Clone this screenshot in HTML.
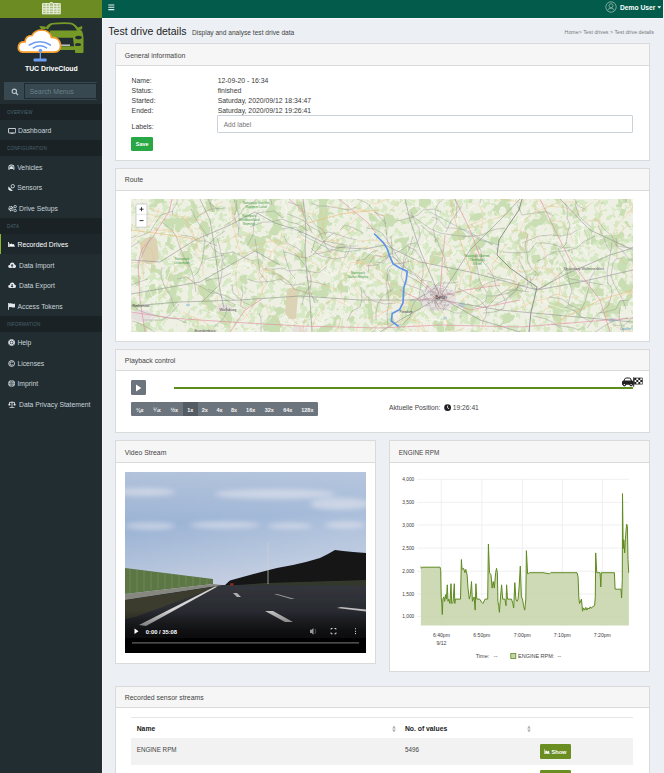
<!DOCTYPE html>
<html><head><meta charset="utf-8">
<style>
*{box-sizing:border-box;margin:0;padding:0}
html,body{width:664px;height:773px;overflow:hidden;background:#ecf0f5;font-family:"Liberation Sans",sans-serif;color:#333}
.abs{position:absolute}
#sb{position:absolute;left:0;top:0;width:101.7px;height:773px;background:#222d32}
#logobar{position:absolute;left:0;top:0;width:101.7px;height:17.7px;background:#6c8b23}
#nav{position:absolute;left:102px;top:0;width:561px;height:17.7px;background:#035c4b}
.sec{position:absolute;left:0;width:101.7px;height:16px;background:#1a2226;color:#4b646f;font-size:4.5px;line-height:17.5px;padding-left:7px;letter-spacing:0.2px}
.item{position:absolute;left:0;width:101.7px;height:20.6px;color:#c8d3d8;font-size:6.8px;line-height:20.6px;white-space:nowrap}
.item .ic{position:absolute;left:8px;top:0;width:9px;height:20.6px}
.item .tx{position:absolute;left:18px;top:1px}
.item.act{background:#1e282c;color:#fff;border-left:1.3px solid #8bb827}
.card{position:absolute;background:#fff;border:1px solid #dadada}
.card .hd{position:absolute;left:0;top:0;right:0;background:#f6f6f6;border-bottom:1px solid #dadada;font-size:6.9px;color:#444;padding-left:8.8px}
</style></head><body>
<div id="sb">
  <div id="logobar">
    <svg class="abs" style="left:41.5px;top:0.8px" width="19" height="14" viewBox="0 0 19 14">
      <path d="M0.6,2.6 Q5,2.2 8,2.2 Q9.3,0.6 10.6,2.2 Q14,2.2 18.2,2.6 L18.2,13.2 L0.6,13.2 Z" fill="#dfe8cc" opacity="0.55"/>
      <g fill="none" stroke="#e8eedb" stroke-width="1.1">
        <path d="M0.6,2.8 Q5,2.2 8,2.2 Q9.3,0.8 10.6,2.2 Q14,2.2 18.2,2.8 L18.2,12.8 L0.6,12.8 Z"/>
        <path d="M0.6,5.3 H18.2 M0.6,7.9 H18.2 M0.6,10.3 H18.2 M4.2,2.5 V12.8 M7.3,2.4 V12.8 M11.6,2.4 V12.8 M15,2.5 V12.8"/>
      </g>
    </svg>
  </div>
  <!-- logo -->
  <svg class="abs" style="left:0;top:18px" width="102" height="46" viewBox="0 18 102 46">
    <g fill="#769a27">
      <path d="M45.5,28 Q48,23.5 52,23 Q61,22 70,22.5 Q75,23 78.5,28.5 L82,31 Q83.5,34 83.5,38 L83.5,52 Q83.5,53 82.5,53 L76,53 Q75,53 75,52 L75,50 L50,50 L50,31 Z"/>
      <path d="M39.3,26 L45.5,26.5 L46,29 L41,29 Z"/>
      <path d="M76.6,28 L82.2,26 L82.2,29.3 L77.5,30 Z"/>
    </g>
    <g fill="#222d32">
      <path d="M47.5,30.4 Q50,25 53,24.6 Q61,23.8 70,24.2 Q74,24.6 77,30.4 Z"/>
      <path d="M54,37.8 L73,37.8 L74,46.3 L54,46.3 Z"/>
      <ellipse cx="78.5" cy="37.5" rx="3.3" ry="1.8"/>
      <ellipse cx="78" cy="44.5" rx="3" ry="1.6"/>
    </g>
    <rect x="58" y="44.5" width="12" height="1.4" fill="#c9ccc9"/>
    <path d="M22.5,52.2 Q17.5,51.5 18.5,46 Q19.5,41.5 25,42 Q25.5,35.5 32,35.5 Q35,30 42,30 Q50,30.5 51.5,37.5 Q59,37 60.5,44.5 Q61,52.2 54,52.2 Z" fill="#fff" stroke="#f39c2c" stroke-width="1.7"/>
    <g fill="none" stroke="#6d9df0" stroke-width="1.5" stroke-linecap="round">
      <path d="M29.3,45 Q40,38.5 50.4,45"/>
      <path d="M33.3,47.9 Q40,43.5 46.6,47.9"/>
    </g>
    <circle cx="40.4" cy="50.6" r="1.8" fill="#6d9df0"/>
    <rect x="39.7" y="51" width="1.3" height="8" fill="#6d9df0"/>
    <rect x="33.6" y="58.6" width="13" height="2.8" rx="0.6" fill="#6d9df0"/>
  </svg>
  <div class="abs" style="left:0;top:63.8px;width:101.7px;text-align:center;color:#fff;font-weight:bold;font-size:6.9px;line-height:10px;padding-left:1px">TUC DriveCloud</div>
  <!-- search -->
  <div class="abs" style="left:4px;top:82px;width:93px;height:18px;background:#374850;border-radius:1px"></div>
  <div class="abs" style="left:24px;top:83px;width:72.5px;height:16px;background:#374850;border:0.8px solid #1f2b30"></div>
  <svg class="abs" style="left:11px;top:87.5px" width="8" height="8" viewBox="0 0 8 8"><circle cx="3.3" cy="3.3" r="2.2" fill="none" stroke="#b8c7ce" stroke-width="1.1"/><path d="M5,5 L7,7" stroke="#b8c7ce" stroke-width="1.3"/></svg>
  <div class="abs" style="left:29.8px;top:84px;line-height:16px;font-size:6.8px;color:#6a808a">Search Menus</div>

  <div class="sec" style="top:104px">OVERVIEW</div>
  <div class="item" style="top:120px"><span class="tx">Dashboard</span></div>
  <div class="sec" style="top:140px">CONFIGURATION</div>
  <div class="item" style="top:157px"><span class="tx" style="left:17.2px">Vehicles</span></div>
  <div class="item" style="top:176.7px"><span class="tx" style="left:17.2px">Sensors</span></div>
  <div class="item" style="top:197.3px"><span class="tx" style="left:19px;top:2px">Drive Setups</span></div>
  <div class="sec" style="top:218px">DATA</div>
  <div class="item act" style="top:234px;height:20.3px"><span class="tx" style="left:16.5px">Recorded Drives</span></div>
  <div class="item" style="top:254.5px"><span class="tx" style="left:19px">Data Import</span></div>
  <div class="item" style="top:275px"><span class="tx" style="left:19px">Data Export</span></div>
  <div class="item" style="top:295.5px"><span class="tx" style="left:17.5px">Access Tokens</span></div>
  <div class="sec" style="top:316px">INFORMATION</div>
  <div class="item" style="top:332px"><span class="tx" style="left:17.4px">Help</span></div>
  <div class="item" style="top:352.7px"><span class="tx" style="left:17.4px">Licenses</span></div>
  <div class="item" style="top:373.3px"><span class="tx" style="left:17.4px">Imprint</span></div>
  <div class="item" style="top:394px"><span class="tx" style="left:19px">Data Privacy Statement</span></div>
<svg class="abs" style="left:8.1px;top:127.6px" width="8.2" height="6.4" viewBox="0 0 8.2 6.4"><rect x="0.45" y="0.45" width="7.3" height="4.5" rx="0.5" fill="none" stroke="#e2e8eb" stroke-width="0.9"/><path d="M2.6,6.1 H5.6 M4.1,5 V6" stroke="#e2e8eb" stroke-width="0.9"/></svg>
<svg class="abs" style="left:8.1px;top:163.6px" width="6.8" height="6.3" viewBox="0 0 6.8 6.3"><path d="M0.4,3.2 Q0.4,0.4 3.4,0.4 Q6.4,0.4 6.4,3.2 L6.4,5.8 L5.2,5.8 L5.2,5 L1.6,5 L1.6,5.8 L0.4,5.8 Z" fill="#e2e8eb"/><path d="M1.3,2.6 Q3.4,1 5.5,2.6" stroke="#222d32" stroke-width="0.8" fill="none"/><rect x="1" y="3.5" width="1.1" height="0.8" fill="#222d32"/><rect x="4.7" y="3.5" width="1.1" height="0.8" fill="#222d32"/></svg>
<svg class="abs" style="left:8.1px;top:184px" width="7" height="7.3" viewBox="0 0 7 7.3"><path d="M0.5,2.5 L4.8,6.8 Q1.5,7.5 0.5,5.5 Q0,4 0.5,2.5 Z" fill="#e2e8eb"/><circle cx="4.8" cy="2.2" r="1.7" fill="none" stroke="#e2e8eb" stroke-width="0.8"/><path d="M2.8,4.5 L3.8,3.3" stroke="#e2e8eb" stroke-width="0.8"/></svg>
<svg class="abs" style="left:8.1px;top:204.8px" width="9" height="7" viewBox="0 0 9 7"><circle cx="3" cy="3.6" r="2" fill="none" stroke="#e2e8eb" stroke-width="1.3" stroke-dasharray="0.9 0.5"/><circle cx="3" cy="3.6" r="0.9" fill="#e2e8eb"/><circle cx="7.2" cy="1.6" r="1.2" fill="none" stroke="#e2e8eb" stroke-width="0.8"/><circle cx="7.2" cy="5.6" r="1.2" fill="none" stroke="#e2e8eb" stroke-width="0.8"/></svg>
<svg class="abs" style="left:7.9px;top:242px" width="7" height="5.4" viewBox="0 0 7 5.4"><path d="M0.4,0 V4.9 H7" stroke="#fff" stroke-width="0.9" fill="none"/><path d="M1.3,4.3 V1.2 L2.5,2.2 L3.6,1.6 L4.8,2.6 L6,2 L6.6,4.3 Z" fill="#fff"/></svg>
<svg class="abs" style="left:7.9px;top:262.4px" width="8.2" height="6.3" viewBox="0 0 8.2 6.3"><path d="M1.8,6 Q0,6 0.2,4.3 Q0.4,2.8 1.8,2.9 Q2.2,0.4 4.3,0.4 Q6.3,0.5 6.5,2.5 Q8.1,2.8 8,4.4 Q7.9,6 6.3,6 Z" fill="#e2e8eb"/><path d="M4.1,2 L5.6,3.6 H4.6 V5.4 H3.6 V3.6 H2.6 Z" fill="#222d32"/></svg>
<svg class="abs" style="left:7.9px;top:282px" width="8.2" height="6.3" viewBox="0 0 8.2 6.3"><path d="M1.8,6 Q0,6 0.2,4.3 Q0.4,2.8 1.8,2.9 Q2.2,0.4 4.3,0.4 Q6.3,0.5 6.5,2.5 Q8.1,2.8 8,4.4 Q7.9,6 6.3,6 Z" fill="#e2e8eb"/><path d="M4.1,5.5 L5.6,3.9 H4.6 V2.1 H3.6 V3.9 H2.6 Z" fill="#222d32"/></svg>
<svg class="abs" style="left:7.9px;top:302.8px" width="7.2" height="6.8" viewBox="0 0 7.2 6.8"><path d="M0.5,0 V6.8" stroke="#e2e8eb" stroke-width="0.9"/><path d="M1,0.5 Q2.5,0 4,0.6 Q5.5,1.2 7,0.6 V4.3 Q5.5,4.9 4,4.3 Q2.5,3.7 1,4.3 Z" fill="#e2e8eb"/></svg>
<svg class="abs" style="left:7.9px;top:339.2px" width="7.2" height="7" viewBox="0 0 7.2 7"><circle cx="3.6" cy="3.5" r="3.3" fill="#e2e8eb"/><circle cx="3.6" cy="3.5" r="1.4" fill="none" stroke="#222d32" stroke-width="0.7"/><path d="M1.3,1.3 L2.6,2.5 M5.9,1.3 L4.6,2.5 M1.3,5.7 L2.6,4.5 M5.9,5.7 L4.6,4.5" stroke="#222d32" stroke-width="0.6"/></svg>
<svg class="abs" style="left:7.9px;top:360px" width="7.2" height="7" viewBox="0 0 7.2 7"><circle cx="3.6" cy="3.5" r="2.9" fill="none" stroke="#e2e8eb" stroke-width="0.9"/><path d="M4.8,2.5 Q4.2,1.9 3.6,1.9 Q2.1,1.9 2.1,3.5 Q2.1,5.1 3.6,5.1 Q4.2,5.1 4.8,4.5" stroke="#e2e8eb" stroke-width="0.8" fill="none"/></svg>
<svg class="abs" style="left:7.9px;top:380.1px" width="7.2" height="7" viewBox="0 0 7.2 7"><circle cx="3.6" cy="3.5" r="3.3" fill="#e2e8eb"/><path d="M3.6,0.6 V6.4 M0.6,3.5 H6.6 M1.2,2 H6 M1.2,5 H6" stroke="#222d32" stroke-width="0.45"/><ellipse cx="3.6" cy="3.5" rx="1.5" ry="3" fill="none" stroke="#222d32" stroke-width="0.45"/></svg>
<svg class="abs" style="left:7.9px;top:400.8px" width="8" height="7" viewBox="0 0 8 7"><path d="M4,0.3 V6.3 M1.5,6.6 H6.5 M1,1.4 H7" stroke="#e2e8eb" stroke-width="0.8"/><path d="M0.2,4 L1.4,1.6 L2.6,4 Q1.4,5.2 0.2,4 Z M5.4,4 L6.6,1.6 L7.8,4 Q6.6,5.2 5.4,4 Z" fill="#e2e8eb"/></svg>
</div>
<div class="abs" style="left:101.7px;top:17.7px;width:1px;height:756px;background:#f4f6fa"></div>
<div id="wl" class="abs" style="left:102px;top:17.7px;width:561px;height:1.3px;background:#f8f9fb"></div>
<div class="abs" style="left:663px;top:0;width:1px;height:773px;background:#efefef"></div>
<div id="nav">
  <svg class="abs" style="left:5.7px;top:3.6px" width="7" height="7" viewBox="0 0 7 7"><path d="M0.3,1 H6.3 M0.3,3.3 H6.3 M0.3,5.6 H6.3" stroke="#e8f0ee" stroke-width="1.1"/></svg>
  <svg class="abs" style="left:502.5px;top:1px" width="12" height="12" viewBox="0 0 12 12"><g fill="none" stroke="#a9c7bf" stroke-width="0.7"><circle cx="6" cy="6" r="5.2"/><circle cx="6" cy="4.7" r="2"/><path d="M2.6,9.6 Q3.2,7.2 6,7.2 Q8.8,7.2 9.4,9.6"/></g></svg>
  <div class="abs" style="left:518px;top:0;line-height:15.6px;font-size:6.7px;font-weight:bold;color:#fff;white-space:nowrap">Demo User</div>
  <svg class="abs" style="left:555px;top:6px" width="5" height="3" viewBox="0 0 5 3"><path d="M0.3,0.3 H4.2 L2.25,2.6 Z" fill="#fff"/></svg>
</div>
<div class="abs" style="left:108.3px;top:24.3px;font-size:10.5px;line-height:14px;color:#222;white-space:nowrap">Test drive details</div>
<div class="abs" style="left:192px;top:28px;font-size:6.6px;line-height:9px;color:#444;white-space:nowrap">Display and analyse test drive data</div>
<div class="abs" style="left:564.6px;top:28px;font-size:5.3px;line-height:9px;color:#777;white-space:nowrap">Home&gt; Test drives &gt; Test drive details</div>

<!-- General information -->
<div class="card" style="left:115px;top:43px;width:535px;height:118px">
  <div class="hd" style="height:22px;line-height:23px">General information</div>
</div>
<!-- Route -->
<div class="card" style="left:115px;top:168px;width:535px;height:174px">
  <div class="hd" style="height:22px;line-height:22px">Route</div>
</div>
<!-- Playback -->
<div class="card" style="left:115px;top:349px;width:535px;height:84px">
  <div class="hd" style="height:21px;line-height:22px">Playback control</div>
</div>
<!-- Video -->
<div class="card" style="left:115px;top:440px;width:261px;height:224px">
  <div class="hd" style="height:22px;line-height:23px">Video Stream</div>
</div>
<!-- Engine RPM -->
<div class="card" style="left:389px;top:440px;width:261px;height:232px">
  <div class="hd" style="height:22px;line-height:23px;font-size:6.4px">ENGINE RPM</div>
</div>
<!-- Recorded sensor streams -->
<div class="card" style="left:115px;top:686px;width:535px;height:120px">
  <div class="hd" style="height:21px;line-height:22px">Recorded sensor streams</div>
</div>
<div class="abs" style="left:131.6px;top:75.5px;font-size:6.85px;line-height:10px;color:#3a3a3a;white-space:nowrap">Name:<br>Status:<br>Started:<br>Ended:</div>
<div class="abs" style="left:217.7px;top:75.5px;font-size:6.85px;line-height:10px;color:#3a3a3a;white-space:nowrap">12-09-20 - 16:34<br>finished<br>Saturday, 2020/09/12 18:34:47<br>Saturday, 2020/09/12 19:26:41</div>
<div class="abs" style="left:131.6px;top:122.3px;font-size:6.85px;line-height:10px;color:#3a3a3a">Labels:</div>
<div class="abs" style="left:217px;top:115px;width:416px;height:18px;border:1px solid #ccd2da;border-radius:1px;background:#fff"></div>
<div class="abs" style="left:223.7px;top:115.5px;line-height:17px;font-size:6.6px;color:#777">Add label</div>
<div class="abs" style="left:131px;top:137px;width:22.2px;height:13.5px;background:#28a745;border-radius:1.3px;color:#fff;font-size:5.4px;font-weight:bold;line-height:15px;text-align:center">Save</div>
<svg class="abs" style="left:131px;top:199px" width="502" height="133" viewBox="131 199 502 133">
<defs>
<filter id="tx1" x="0" y="0" width="100%" height="100%" color-interpolation-filters="sRGB"><feTurbulence type="fractalNoise" baseFrequency="0.16" numOctaves="3" seed="4"/><feColorMatrix type="matrix" values="0 0 0 0 0.84  0 0 0 0 0.91  0 0 0 0 0.77  22 0 0 0 -11.8"/></filter>
<filter id="tx2" x="0" y="0" width="100%" height="100%" color-interpolation-filters="sRGB"><feTurbulence type="fractalNoise" baseFrequency="0.06" numOctaves="3" seed="9"/><feColorMatrix type="matrix" values="0 0 0 0 0.79  0 0 0 0 0.87  0 0 0 0 0.70  25 0 0 0 -14.6"/></filter>
</defs>
<rect x="131" y="199" width="502" height="133" fill="#eff0e4"/>
<rect x="131" y="199" width="502" height="133" filter="url(#tx1)"/>
<rect x="131" y="199" width="502" height="133" filter="url(#tx2)"/>
<path d="M140,243 Q150,232 157,240 L159,258 Q152,268 143,262 Z M287,290 Q296,283 298,295 L296,318 Q289,322 285,312 Z" fill="#dcd2b4"/>
<g fill="#aad3df"><ellipse cx="612" cy="320" rx="3" ry="2"/><ellipse cx="300" cy="232" rx="1.5" ry="1"/><ellipse cx="462" cy="305" rx="3" ry="2.5"/><ellipse cx="445" cy="318" rx="2" ry="1.5"/><ellipse cx="188" cy="305" rx="2" ry="1.2"/></g>
<g fill="#e4e0de"><ellipse cx="438" cy="298" rx="18" ry="13"/><ellipse cx="300" cy="330" rx="8" ry="4"/><ellipse cx="143" cy="316" rx="12" ry="6"/><ellipse cx="224" cy="308" rx="8" ry="4"/></g>
<path d="M358,273 L358,268 L361,258 L359,253 L356,246 L357,235 L363,228M430,252 L428,256 L429,260 L427,270 L429,276M428,225 L434,229 L439,233 L430,238 L422,244 L418,248M166,301 L159,303 L157,299 L152,296 L147,285 L142,280M168,283 L167,279 L170,272 L176,264 L177,260 L176,251M226,267 L233,267 L244,263 L248,263 L252,270M632,202 L636,201 L640,203 L646,209M548,250 L557,251 L563,250 L563,242 L567,234M566,223 L568,228 L576,235 L581,245 L587,255M434,255 L444,257 L451,258 L455,251M392,323 L397,325 L405,320 L408,315 L411,312M266,258 L272,259 L273,255 L272,250 L266,242M393,325 L387,320 L383,318 L377,312M169,208 L164,215 L158,223 L148,224 L141,231M590,246 L591,235 L586,226 L579,223M424,280 L435,282 L440,287 L450,289M423,258 L422,251 L420,247 L425,245M523,287 L516,286 L509,281 L506,271M303,323 L298,325 L291,322 L283,314 L277,317M424,241 L428,242 L430,246 L427,249 L423,256 L416,256 L409,261M468,294 L469,288 L477,284 L482,280 L486,272 L484,265 L481,260M517,234 L519,230 L523,223 L523,218M230,309 L234,318 L237,323 L243,331M402,325 L394,333 L390,334 L386,331 L379,328M445,320 L445,326 L444,335 L439,344 L441,349 L430,355M401,304 L404,310 L404,318 L401,328M376,203 L378,195 L380,186 L390,178M583,268 L575,260 L571,263 L567,266 L562,275 L559,283 L565,290M287,250 L290,244 L295,240 L303,239 L307,238M320,271 L328,274 L331,277 L335,281 L338,292 L343,301 L350,306M302,319 L310,318 L314,319 L318,323 L322,324 L324,319 L330,312M254,265 L243,265 L235,271 L232,281M143,283 L137,277 L133,274 L126,268 L126,263M590,283 L586,293 L581,297 L577,294 L572,291M496,234 L501,232 L509,227 L516,223 L522,219 L530,214 L535,207M303,332 L307,322 L311,314 L315,311M189,222 L198,228 L206,237 L211,243 L216,249 L223,252M347,279 L354,281 L364,281 L369,279M388,201 L396,197 L403,196 L411,202 L420,207 L423,211 L426,217M402,248 L395,252 L390,256 L385,262 L376,264M444,230 L451,228 L457,222 L458,215 L466,211 L475,205M623,202 L620,199 L618,194 L616,188 L613,178M407,267 L410,263 L408,254 L407,243M211,262 L217,268 L224,271 L230,271 L238,268 L246,267 L255,264M506,203 L515,202 L518,199 L525,197M331,276 L337,272 L345,272 L352,276 L363,280 L374,283M541,279 L549,280 L557,281 L562,282 L568,278 L574,277 L581,270M397,332 L402,328 L412,332 L415,340 L421,347M415,278 L413,273 L409,262 L419,259 L426,259M344,282 L348,285 L349,293 L346,302 L346,307 L344,314M505,311 L514,305 L524,302 L527,296M207,219 L212,215 L216,212 L214,203 L210,198 L202,194M348,275 L348,270 L353,267 L359,264 L365,256 L368,252 L369,245M495,248 L506,242 L511,233 L508,227 L508,220 L498,216 L495,211M313,248 L315,257 L319,262 L327,267 L331,271 L333,281 L332,292M242,207 L239,217 L239,221 L242,224 L247,226 L251,227M449,218 L444,217 L436,213 L435,203 L429,193 L427,184 L419,178M486,321 L477,326 L466,328 L462,339 L463,348 L469,356M343,255 L343,260 L344,266 L350,276 L351,280M286,214 L287,210 L284,203 L283,197 L279,192M426,279 L425,286 L418,295 L407,296 L399,300M559,263 L558,268 L562,278 L566,281 L572,290 L567,299M526,207 L535,200 L541,200 L548,196M570,254 L571,246 L579,244 L588,245 L593,246M518,199 L521,194 L524,185 L530,180 L541,177M425,313 L429,316 L431,327 L430,335 L427,339M549,240 L558,241 L561,238 L570,234M470,298 L474,290 L481,284 L486,281M414,260 L423,263 L434,265 L444,266 L446,258M175,224 L174,233 L164,234 L161,238M202,212 L204,207 L201,199 L202,194 L204,189M335,209 L347,207 L352,208 L360,211 L366,204 L373,197 L377,188M254,330 L247,331 L244,334 L237,333 L230,342 L226,350M210,301 L213,297 L222,292 L231,295 L242,297M230,325 L225,319 L219,315 L208,311 L203,307M574,259 L578,252 L579,243 L578,231 L588,228M433,215 L435,206 L433,199 L435,189 L440,183 L440,172M632,217 L638,210 L638,205 L632,200 L632,195 L633,188 L632,182M599,206 L602,200 L603,193 L606,182 L611,178M272,317 L264,324 L253,328 L247,330 L244,333 L237,342 L234,348M320,242 L325,239 L336,236 L345,229M370,213 L372,202 L362,195 L356,192 L350,198 L346,206M343,215 L347,217 L349,213 L350,207 L349,203M580,307 L571,309 L563,309 L557,307 L548,304 L539,298M572,226 L578,223 L585,227 L589,238M232,283 L226,290 L222,301 L216,302M342,316 L340,327 L338,331 L335,341 L337,348 L341,358 L340,366M189,268 L198,264 L201,261 L209,259 L217,258M154,279 L156,283 L158,295 L157,305 L156,309 L151,319M443,321 L432,319 L424,320 L415,322" fill="none" stroke="#fdfdf8" stroke-width="0.55"/>
<path d="M312,287 L311,276 L322,267 L330,260 L332,248 L339,240 L347,234 L357,228M261,271 L271,270 L281,276 L289,282 L293,287 L297,290 L306,292 L313,293M532,209 L538,199 L539,188 L545,179 L553,170 L560,160 L558,151 L554,144M256,265 L245,259 L241,252 L238,246 L236,237 L233,225 L233,216 L232,204M151,231 L160,230 L173,232 L180,241 L189,251M438,238 L444,242 L451,247 L449,254 L451,260M425,331 L421,322 L408,319 L396,323 L387,324 L379,325 L373,327 L368,332M239,261 L236,270 L236,280 L237,289 L240,296 L243,310 L250,319M388,274 L382,271 L369,266 L362,262 L351,254M141,242 L141,255 L144,267 L143,278M283,280 L278,278 L273,272 L267,270 L257,264M262,295 L263,286 L259,278 L258,270 L261,264M317,280 L320,284 L332,288 L337,289M559,273 L560,287 L559,297 L559,303M346,251 L354,259 L360,263 L368,272 L374,277 L383,284 L397,284M535,263 L539,275 L535,280 L528,279 L521,284 L510,287 L500,295 L493,299M318,239 L323,229 L325,216 L327,211 L329,206M155,271 L148,268 L142,262 L129,263M150,217 L146,220 L136,225 L131,228 L121,230 L119,226M406,312 L400,303 L387,300 L379,302M305,317 L303,330 L310,341 L312,350 L308,359M317,237 L311,231 L304,222 L303,209 L298,197 L298,189 L288,181 L282,182M443,254 L436,255 L432,263 L427,273 L423,280 L415,282M512,311 L518,309 L528,304 L534,301 L545,299 L558,294 L566,297 L580,297M266,235 L272,241 L277,245 L290,250 L297,255 L306,258 L317,265M549,313 L556,317 L560,323 L569,323M441,301 L448,299 L459,292 L460,282 L465,270 L470,265 L476,254M267,275 L266,284 L262,291 L260,296 L252,307 L249,313 L243,320M632,226 L641,222 L651,219 L663,218 L669,221 L675,226 L680,237M418,324 L425,333 L431,337 L432,343M365,317 L369,319 L380,315 L390,308 L394,296 L403,288M626,212 L639,212 L648,207 L656,206 L668,204 L679,196 L688,190M357,241 L364,241 L370,240 L378,241 L385,243 L393,243M223,202 L215,205 L204,214 L197,214M573,242 L570,233 L562,222 L550,220M539,208 L529,217 L525,219 L520,230 L521,235 L531,240M304,257 L299,254 L290,246 L280,241 L271,241 L261,244 L251,245M390,203 L386,199 L381,193 L374,190 L365,186 L356,180 L354,175M617,299 L626,293 L639,299 L645,306M630,208 L630,200 L631,191 L627,179 L624,168 L625,163M410,304 L405,301 L395,293 L387,282 L379,273M221,243 L227,241 L234,237 L247,235 L252,232M627,226 L620,232 L617,244 L617,257 L626,264M236,227 L235,221 L232,216 L232,208 L230,201M630,291 L634,285 L633,279 L631,269 L634,262 L636,257M389,255 L381,253 L370,248 L359,247M359,323 L357,328 L356,337 L356,351 L352,357 L350,364 L354,372M197,318 L198,331 L195,343 L189,349 L183,351 L178,353 L168,357M481,331 L483,325 L483,319 L477,309M162,229 L170,230 L176,231 L180,235 L180,247 L181,260 L187,267M548,268 L552,270 L556,282 L562,293M464,328 L456,331 L449,334 L443,333M338,274 L342,267 L345,257 L346,251M175,267 L174,272 L169,277 L167,286 L162,298M183,312 L193,317 L205,322 L208,326 L212,330 L217,340 L223,343 L229,344M282,328 L277,321 L269,314 L265,304M341,318 L338,327 L337,340 L340,352 L339,359 L342,368 L342,376 L344,381M550,207 L543,204 L535,197 L529,196 L522,203 L513,201 L502,199 L497,201M476,247 L479,253 L490,257 L495,260 L504,268 L510,269 L516,278 L518,289M318,211 L314,215 L306,212 L298,211M542,304 L541,295 L541,290 L543,278M441,290 L440,295 L439,306 L446,318 L449,330 L452,338 L456,347 L462,352M190,242 L194,235 L188,224 L183,217M478,286 L484,286 L497,283 L503,284 L517,284M598,226 L600,216 L600,204 L598,199 L593,190 L589,185 L582,180M428,268 L419,273 L417,279 L412,289 L409,298 L404,307 L403,313 L396,324M534,233 L540,241 L545,253 L545,263 L546,270M509,213 L500,217 L490,220 L478,226 L466,228M535,212 L546,208 L554,204 L560,202 L574,202M316,242 L330,241 L335,238 L343,228 L353,222 L358,217M169,203 L174,199 L176,189 L180,185 L187,185 L197,190 L208,192 L215,189M345,303 L341,296 L341,284 L346,275 L349,268 L351,262 L365,264 L378,264M182,274 L189,279 L197,286 L202,289 L206,302 L209,313M560,303 L555,306 L545,309 L539,321M182,218 L187,220 L187,226 L194,237 L197,244 L198,250 L204,253M346,305 L333,299 L326,303 L323,308 L315,319 L313,325 L311,339 L306,346M206,224 L202,220 L193,220 L185,217 L178,216 L170,215 L157,211 L149,208M494,268 L484,278 L481,284 L475,291 L470,295M471,280 L472,273 L475,266 L476,259 L473,248 L479,237 L482,226 L483,219M240,254 L246,253 L258,249 L269,251 L276,253 L287,260M413,325 L418,327 L418,336 L416,342M165,220 L152,215 L146,214 L140,215 L138,221M471,316 L463,306 L462,300 L471,293 L470,282 L471,272 L475,265M393,308 L383,312 L378,312 L371,301 L361,296 L354,288 L357,283 L352,274M307,332 L300,331 L299,326 L291,317M332,206 L345,209 L349,213 L359,210 L364,211M143,244 L152,250 L154,261 L155,267M203,276 L203,266 L197,254 L194,248 L201,237 L202,230 L194,228M217,295 L218,304 L222,314 L229,322 L230,328 L232,339 L231,350 L237,359M332,265 L336,256 L340,248 L337,241 L328,240 L324,234 L322,222 L321,209M384,256 L375,256 L363,261 L354,265M303,225 L300,238 L310,243 L319,252 L331,251 L338,254 L341,261M593,202 L584,209 L576,213 L564,207 L557,207 L549,206M259,280 L266,268 L270,258 L271,252 L280,244 L282,231M417,324 L414,320 L416,307 L410,305 L400,301 L393,296 L386,289M478,203 L484,214 L480,221 L467,226M520,243 L520,257 L518,268 L516,274 L514,281 L518,294 L523,300 L526,308M612,238 L614,231 L619,223 L625,217 L632,208 L639,200 L641,187 L645,178M632,269 L638,278 L638,290 L629,294M600,235 L602,226 L599,220 L586,221M159,208 L156,217 L150,225 L140,231 L135,240 L127,247 L120,247 L115,245M369,201 L375,204 L382,201 L394,197 L390,184 L387,179 L377,172M493,276 L492,264 L498,258 L502,250 L507,244M444,254 L447,266 L447,275 L457,285M525,252 L527,245 L528,234 L518,230 L511,231M518,271 L528,272 L534,268 L543,268 L555,274 L561,278M611,298 L607,310 L607,319 L616,327 L627,331 L638,332 L648,330M404,330 L416,337 L419,344 L426,349 L432,352 L443,348 L446,341 L450,336M435,260 L425,263 L414,262 L408,261 L397,264 L386,258 L378,256M401,202 L395,205 L387,216 L380,215 L374,215 L363,210 L354,207" fill="none" stroke="#efc38a" stroke-width="0.45"/>
<path d="M480,203 L481,196 L480,188 L471,179 L466,173 L464,164M539,275 L531,268 L528,262 L527,253 L525,245 L528,234M217,246 L206,241 L197,241 L193,237 L181,235M505,301 L503,296 L496,287 L494,278 L488,267 L482,261 L481,251 L478,246M208,289 L214,292 L219,294 L223,298 L229,302 L236,305M213,212 L210,204 L213,194 L210,183 L207,176M327,266 L319,273 L306,271 L299,270 L288,271 L283,268 L275,269 L262,269M411,261 L404,263 L394,264 L388,268 L387,273 L388,282 L391,292M151,237 L145,249 L140,260 L138,269M628,318 L618,320 L609,323 L598,330 L591,336 L585,344 L582,354 L578,358M241,286 L243,293 L240,306 L246,309M226,305 L227,310 L225,316 L221,321 L214,327M612,242 L611,250 L609,261 L607,273 L608,284M326,285 L319,283 L308,281 L306,276M225,231 L216,237 L210,243 L206,247M378,250 L372,252 L365,259 L356,261M604,285 L593,283 L583,281 L571,279 L566,277M565,203 L568,211 L567,218 L570,225 L568,231 L566,244 L561,249M456,218 L457,205 L455,200 L455,193 L456,188M232,284 L233,293 L239,298 L243,302 L250,305M627,203 L622,191 L623,183 L622,177M533,316 L546,319 L552,322 L562,329M525,292 L528,285 L527,278 L524,270 L519,260M427,289 L422,284 L414,279 L408,276 L403,268 L404,257 L409,250 L413,236M326,235 L322,229 L316,226 L309,216M231,273 L221,278 L211,279 L206,281M347,321 L352,311 L360,307 L362,299 L361,287M363,290 L366,296 L373,301 L385,304 L396,303M311,285 L307,290 L304,296 L302,305M551,324 L561,326 L574,328 L579,330M483,313 L494,312 L503,309 L507,299 L517,290 L519,282M520,283 L515,291 L505,300 L496,304M311,248 L315,252 L321,256 L335,259 L346,257 L351,246M172,215 L173,209 L177,203 L178,192 L181,183 L184,170 L188,165 L198,165M197,217 L206,211 L212,209 L226,208M272,205 L271,200 L266,191 L254,189 L248,186 L242,179 L239,172M591,227 L584,221 L579,216 L575,204M620,308 L619,317 L621,324 L624,333 L624,340 L626,347 L635,356 L642,356M162,267 L161,277 L164,285 L171,297 L174,307M196,292 L194,280 L191,269 L184,257 L179,245 L177,238 L172,230 L163,223M208,237 L204,231 L197,221 L191,209M283,249 L286,260 L289,269 L291,274 L295,278M482,324 L486,316 L487,309 L481,301 L477,298 L467,293 L458,288M253,261 L245,258 L233,252 L220,254 L212,248 L210,242M411,212 L415,222 L419,228 L420,236 L418,241 L415,246 L411,255M568,306 L570,296 L572,291 L570,285 L567,272 L566,264 L561,255 L558,248M522,243 L527,241 L539,236 L551,235 L561,236 L571,234 L577,230M363,233 L354,228 L345,225 L340,230M458,282 L451,283 L438,283 L433,289 L428,293 L416,299 L410,300M308,231 L298,224 L289,222 L282,219 L271,222 L263,222 L258,224 L250,227M311,203 L319,206 L325,206 L337,208 L342,209 L350,210 L356,207M302,258 L302,252 L297,248 L287,243 L284,236M358,246 L350,246 L342,247 L330,251 L322,253 L313,254M585,209 L578,206 L574,198 L570,195 L562,190 L554,180M430,308 L439,308 L448,310 L455,313 L462,313M595,271 L590,279 L589,287 L587,294 L585,302 L581,310 L579,315M572,247 L564,248 L552,244 L543,243 L536,243 L529,252 L517,253 L503,252M581,310 L570,305 L562,299 L549,297M432,217 L438,219 L446,228 L453,228 L466,230 L476,236 L488,242 L493,245M487,296 L493,296 L499,295 L509,293 L520,286 L526,285 L531,281 L536,274M390,269 L386,282 L388,294 L389,303 L387,314 L388,327M288,202 L301,206 L304,216 L307,222 L312,233M406,258 L403,267 L401,276 L404,283 L411,286 L422,290 L425,296 L422,302M613,325 L623,326 L628,322 L637,313 L636,308 L642,300 L652,292M628,258 L622,250 L617,247 L612,236 L605,230 L598,221M406,213 L418,220 L429,228 L440,233 L452,235 L463,236 L471,236M219,210 L210,204 L206,191 L205,180 L196,170 L184,166M628,260 L640,259 L648,256 L656,259 L664,263 L669,265 L679,268 L688,273M487,273 L499,278 L511,280 L516,282M284,252 L289,253 L299,257 L307,258 L314,254 L321,245 L326,239 L335,232M311,253 L313,248 L315,240 L320,234 L329,232 L339,235 L348,238 L357,240M323,241 L329,242 L340,244 L347,245M436,242 L433,228 L437,222 L435,209 L438,204 L442,200 L451,193 L458,187M132,304 L138,310 L146,313 L154,315 L168,318 L177,319 L187,323M553,216 L547,212 L541,212 L528,214 L522,215 L517,204M376,262 L384,263 L388,257 L394,257 L398,262 L404,270 L416,276 L421,281M226,256 L222,261 L222,272 L220,284 L212,292 L202,302M591,322 L580,316 L575,311 L565,307M132,321 L139,323 L150,329 L156,333 L160,339 L159,347M194,276 L198,272 L202,262 L204,249 L205,242 L203,233M272,273 L278,275 L289,282 L294,289 L307,293 L318,301M236,200 L237,208 L234,216 L239,229M138,237 L150,232 L153,227 L158,219 L161,215 L173,211M376,320 L376,312 L378,303 L383,296 L393,289M616,238 L617,246 L629,248 L639,246 L647,240 L652,233M629,300 L620,301 L616,309 L606,312 L598,313M204,260 L210,258 L215,257 L224,255M473,308 L482,304 L486,300 L487,293 L480,282 L478,272 L476,262 L476,253M598,226 L604,238 L607,246 L611,252M224,226 L231,222 L240,214 L244,208 L255,201 L259,194 L265,191 L274,185M287,214 L293,216 L303,220 L308,225 L319,231 L324,242 L327,248 L331,253M441,212 L434,209 L423,210 L418,215 L409,218 L397,221M406,268 L398,258 L393,249 L388,244 L387,238 L386,229 L384,216 L374,212M479,290 L484,285 L490,282 L500,280M432,282 L423,280 L415,274 L404,267 L398,261 L393,257 L392,249 L391,236M407,246 L415,250 L420,257 L423,262 L423,274 L421,284 L419,296 L422,306M449,272 L444,264 L445,259 L440,248 L437,240 L434,236 L429,232 L421,225M242,238 L238,235 L239,226 L239,215 L236,207 L234,198 L233,189M368,273 L369,264 L375,255 L383,257 L395,253 L402,250 L409,244 L416,243M247,246 L253,235 L254,223 L257,213 L265,212 L274,211 L283,218M259,313 L261,319 L261,333 L263,339 L264,345 L267,355 L268,368M587,328 L595,317 L601,312 L608,306 L612,294 L611,287 L607,282M148,279 L136,283 L127,287 L115,289 L108,286 L101,285M225,266 L223,262 L220,249 L219,244 L217,238M446,232 L451,221 L454,217 L462,206M530,277 L532,288 L540,289 L551,282 L560,274 L564,270 L571,271M386,224 L377,214 L369,205 L365,202 L352,197 L341,193M295,253 L303,263 L310,273 L311,280 L310,291 L315,303M140,241 L131,247 L126,248 L119,252 L108,259 L106,265 L102,275 L98,280M143,320 L155,320 L162,320 L170,315 L173,311 L179,304M537,261 L543,259 L548,255 L557,251 L566,251 L577,248 L583,242 L595,236M626,309 L623,300 L619,293 L614,284 L611,276 L613,263 L616,259 L622,258M366,266 L377,265 L387,258 L393,251 L389,243 L382,233 L374,229 L366,228M136,236 L131,238 L120,240 L108,242 L95,246M305,284 L293,285 L287,284 L280,279 L273,281 L262,282 L257,282 L247,279M425,294 L415,301 L412,307 L410,317 L400,327 L391,337 L386,344M234,300 L226,296 L217,293 L211,293 L205,289 L196,284 L187,277 L177,279M462,237 L473,236 L482,235 L490,231 L497,229 L505,228M255,239 L257,251 L258,259 L260,273 L268,283M485,311 L488,306 L494,300 L497,296 L507,290 L516,290 L529,292" fill="none" stroke="#8e8e8a" stroke-width="0.4"/>
<path d="M282,229 L296,227 L302,235 L314,241 L329,249 L345,252 L360,250 M430,212 L445,220 L460,228 L480,240 L500,245" fill="none" stroke="#8fb0a8" stroke-width="0.5"/>
<path d="M255,212 L275,223 L294,229 L306,234 L333,247 L365,249 L385,245 L420,262 L470,272 L537,290 L580,282 L633,270M303,199 L305,214 L306,233 L305,247 L306,265 L310,300 L312,332M131,260 L160,262 L195,240 L230,225 L255,212M131,294 L200,282 L255,251 L280,265M537,290 L564,275 L610,255 L633,248M131,306 L180,302 L240,300 L300,296 L360,300 L440,300 L500,310 L633,322M440,297 L420,250 L410,220 L405,199M440,297 L470,250 L500,220 L520,199M440,297 L480,320 L520,332M440,297 L400,320 L380,332M200,199 L210,220 L215,250 L220,290 L224,308M560,199 L590,230 L633,250" fill="none" stroke="#8c8c8c" stroke-width="0.55"/>
<path d="M522,199 L519,210 L508,226 L499,240 L497,255 L510,268 L524,278 L537,287 L534,300 L531,312 L529,332" fill="none" stroke="#828282" stroke-width="0.85"/>
<path d="M308,223 L341,214 L357,212 L380,210M131,230 L170,235 L200,240M450,199 L460,240 L470,270M560,320 L600,300 L633,290" fill="none" stroke="#eeb877" stroke-width="0.6"/>
<path d="M172,199 L169,212 L159,227 L153,237 L142,249 L138,263 L140,300 L145,332M131,312 L170,318 L230,322 L300,326 L380,328 L440,325 L520,327 L633,318M339,199 L368,223 L376,233M289,199 L304,212M420,280 L440,297 L465,290 L500,285M540,199 L555,230 L570,260 L600,300 L610,332M455,199 L470,230 L482,262M400,290 L420,300 L440,297 L470,310 L520,300M230,332 L245,310 L262,299M440,297 L442,265 L445,235" fill="none" stroke="#e28aa0" stroke-width="0.6"/>
<path d="M435,295 L433,292M431,293 L436,292M437,304 L442,302M439,307 L435,300M445,301 L444,295M433,288 L436,290M441,303 L443,307M440,299 L433,298M440,300 L440,297M445,304 L443,311M427,298 L424,300M442,292 L444,289M427,302 L429,304M455,292 L461,292M437,288 L433,289M432,292 L430,289M437,301 L437,296M434,310 L430,309M436,299 L439,300M455,295 L448,293M424,295 L428,299M431,293 L428,290M435,294 L430,295M435,298 L435,304M443,305 L449,305M436,286 L441,285M426,305 L431,306M436,307 L436,300M424,298 L429,301M450,294 L444,294M434,300 L436,307M435,298 L430,293M435,295 L439,294M428,298 L430,301M440,301 L446,303M435,294 L440,292M420,302 L417,298M438,287 L437,290M436,286 L433,284M438,294 L440,288M436,296 L431,301M440,299 L434,303M434,295 L440,298M446,289 L448,295M443,298 L440,305M443,299 L442,292M438,301 L442,294M448,293 L454,296M428,288 L428,282M448,297 L442,299M441,289 L445,287M452,290 L450,292M427,292 L433,291M435,286 L439,292M433,300 L432,304M437,289 L435,292M442,287 L445,281M445,300 L440,301M441,294 L446,295M440,299 L436,295M435,297 L430,295M436,302 L439,307M430,305 L428,301M433,295 L433,291M425,292 L427,286M455,290 L456,286M437,308 L439,311M449,304 L444,309M442,290 L440,294M442,299 L445,296" fill="none" stroke="#9a8a90" stroke-width="0.4"/>
<path d="M374.5,234 L383.1,242.3 L387.3,248.9 L389.8,256.4 L393.1,263.8 L399.7,268 L407.2,271.3 L406.3,279.6 L403.8,287.9 L403,302.8 L399.7,309.4 L392.2,313.5 L391.4,321 L398,326" fill="none" stroke="#5a8fe8" stroke-width="1.7" opacity="0.95" stroke-linejoin="round" stroke-linecap="round"/>
<text x="441" y="298.5" font-size="4.6" fill="#444" text-anchor="middle" font-family="Liberation Sans">Berlin</text>
<text x="228" y="310.5" font-size="3.8" fill="#444" text-anchor="middle" font-family="Liberation Sans">Wollsburg</text>
<text x="141" y="306.5" font-size="3.8" fill="#444" text-anchor="middle" font-family="Liberation Sans">Rathenow</text>
<text x="584" y="270" font-size="3.4" fill="#555" text-anchor="middle" font-family="Liberation Sans">Strausberg Wolfenseeblick</text>
<text x="406" y="313" font-size="3.3" fill="#444" text-anchor="middle" font-family="Liberation Sans">Potsdam</text>
<text x="205" y="331.5" font-size="3.6" fill="#444" text-anchor="middle" font-family="Liberation Sans">Brandenburg</text>
<text x="256" y="203.5" font-size="3.2" fill="#3f9a3f" text-anchor="middle" font-family="Liberation Sans">Naturpark Stechlin</text>
<text x="256" y="207.5" font-size="3.2" fill="#3f9a3f" text-anchor="middle" font-family="Liberation Sans">Ruppiner Land</text>
<text x="249" y="217" font-size="3.2" fill="#3f9a3f" text-anchor="middle" font-family="Liberation Sans">Naturpark</text>
<text x="249" y="221" font-size="3.2" fill="#3f9a3f" text-anchor="middle" font-family="Liberation Sans">Westhavelland</text>
<text x="249" y="225" font-size="3.2" fill="#3f9a3f" text-anchor="middle" font-family="Liberation Sans">Niemegk</text>
<text x="182" y="260" font-size="3.2" fill="#3f9a3f" text-anchor="middle" font-family="Liberation Sans">Naturpark</text>
<text x="182" y="264" font-size="3.2" fill="#3f9a3f" text-anchor="middle" font-family="Liberation Sans">Uckermark</text>
<text x="358" y="274" font-size="3.2" fill="#3f9a3f" text-anchor="middle" font-family="Liberation Sans">Naturpark</text>
<text x="358" y="278" font-size="3.2" fill="#3f9a3f" text-anchor="middle" font-family="Liberation Sans">Nuthe-Nieplitz</text>
<text x="477" y="257" font-size="3.2" fill="#3f9a3f" text-anchor="middle" font-family="Liberation Sans">Naturpark Barnim</text>
<text x="477" y="261" font-size="3.2" fill="#3f9a3f" text-anchor="middle" font-family="Liberation Sans">Oberhavel</text>
<text x="477" y="265" font-size="3.2" fill="#3f9a3f" text-anchor="middle" font-family="Liberation Sans">Schorf</text>
<text x="631" y="330" font-size="3.6" fill="#3f8fc0" text-anchor="end" font-family="Liberation Sans">Leaflet</text>
<rect x="136" y="204" width="11" height="23.2" rx="1" fill="#fff" stroke="#bbb" stroke-width="0.7"/>
<path d="M136,214.3 H147" stroke="#ccc" stroke-width="0.5"/>
<path d="M139.5,209.2 H143.5 M141.5,207.2 V211.2 M139.5,220.6 H143.5" stroke="#222" stroke-width="0.9"/>
</svg><!-- playback -->
<div class="abs" style="left:131.1px;top:380.1px;width:14.8px;height:14.6px;background:#6c757d;border-radius:1.3px"></div>
<svg class="abs" style="left:135px;top:383.6px" width="7" height="8" viewBox="0 0 7 8"><path d="M1,0.5 L6.3,4 L1,7.5 Z" fill="#fff"/></svg>
<div class="abs" style="left:173.7px;top:387px;width:459.3px;height:1.9px;background:#5e8c1c"></div>
<svg class="abs" style="left:620.5px;top:376.5px" width="13" height="10" viewBox="0 0 13 10"><path d="M1,5 Q1,3.8 2.5,3.5 L3.8,1.2 Q4.3,0.4 5.5,0.4 L8,0.4 Q9.2,0.4 9.7,1.2 L11,3.5 Q12.5,3.8 12.5,5 L12.5,7.8 L1,7.8 Z" fill="#222"/><path d="M4.5,1.4 L8.8,1.4 L9.8,3.4 L3.6,3.4 Z" fill="#fff"/><circle cx="3.4" cy="7.6" r="1.8" fill="#222"/><circle cx="10.1" cy="7.6" r="1.8" fill="#222"/><circle cx="3.4" cy="7.6" r="0.7" fill="#fff"/><circle cx="10.1" cy="7.6" r="0.7" fill="#fff"/></svg>
<svg class="abs" style="left:633.3px;top:376.8px" width="10" height="10" viewBox="0 0 10 10"><path d="M0.7,0.3 V9.8" stroke="#222" stroke-width="1"/><path d="M1.3,1 H9.4 V7.2 H1.3 Z" fill="#fff" stroke="#222" stroke-width="0.7"/><g fill="#222"><rect x="1.3" y="1" width="2" height="2"/><rect x="5.3" y="1" width="2" height="2"/><rect x="3.3" y="3" width="2" height="2"/><rect x="7.3" y="3" width="2" height="2"/><rect x="1.3" y="5" width="2" height="2"/><rect x="5.3" y="5" width="2" height="2"/></g></svg>
<div class="abs" style="left:131.1px;top:402.2px;height:13.8px;display:flex;border-radius:1.3px;overflow:hidden;background:#6c757d;font-size:5.5px;font-weight:bold;line-height:17px;color:#f4f4f4;text-align:center;white-space:nowrap">
  <div style="width:17.3px">⅛x</div><div style="width:17.3px">¼x</div><div style="width:17.3px">½x</div><div style="width:14.6px;background:#545b62">1x</div><div style="width:14.6px">2x</div><div style="width:14.6px">4x</div><div style="width:14.6px">8x</div><div style="width:18.7px">16x</div><div style="width:18.5px">32x</div><div style="width:18.4px">64x</div><div style="width:20.8px">128x</div>
</div>
<div class="abs" style="left:389px;top:403px;font-size:6.7px;line-height:9.5px;color:#444;white-space:nowrap">Aktuelle Position:</div>
<div class="abs" style="left:452.8px;top:403px;font-size:6.7px;line-height:9.5px;color:#444;white-space:nowrap">19:26:41</div>
<svg class="abs" style="left:443.6px;top:404.3px" width="7.2" height="7.2" viewBox="0 0 8 8"><circle cx="4" cy="4" r="3.8" fill="#222"/><path d="M4,1.8 V4.3 L5.6,5.3" stroke="#fff" stroke-width="0.9" fill="none"/></svg>
<!-- video -->
<svg class="abs" style="left:125px;top:471.8px" width="241" height="181" viewBox="0 0 241 181">
  <defs>
    <linearGradient id="sky" x1="0" y1="0" x2="0.1" y2="1">
      <stop offset="0" stop-color="#aebfd8"/>
      <stop offset="0.3" stop-color="#93add1"/>
      <stop offset="0.5" stop-color="#a8bbd7"/>
      <stop offset="0.8" stop-color="#cfd0e2"/>
      <stop offset="1" stop-color="#d9d1df"/>
    </linearGradient>
    <linearGradient id="skyr" x1="0" y1="0" x2="1" y2="0.3">
      <stop offset="0" stop-color="#fff" stop-opacity="0.05"/>
      <stop offset="1" stop-color="#fff" stop-opacity="0.2"/>
    </linearGradient>
    <linearGradient id="road" x1="0" y1="0" x2="0" y2="1">
      <stop offset="0" stop-color="#33363c"/>
      <stop offset="1" stop-color="#1a1b1f"/>
    </linearGradient>
    <linearGradient id="ctl" x1="0" y1="0" x2="0" y2="1">
      <stop offset="0" stop-color="#000" stop-opacity="0"/>
      <stop offset="0.5" stop-color="#000" stop-opacity="0.55"/>
      <stop offset="1" stop-color="#000" stop-opacity="0.9"/>
    </linearGradient>
    <filter id="bl" x="-20%" y="-50%" width="140%" height="200%"><feGaussianBlur stdDeviation="2.5"/></filter>
    <filter id="bl1"><feGaussianBlur stdDeviation="0.5"/></filter>
  </defs>
  <rect x="0" y="0" width="241" height="181" fill="url(#sky)"/>
  <rect x="0" y="0" width="241" height="120" fill="url(#skyr)"/>
  <g fill="#eeecf2" opacity="0.5" filter="url(#bl)">
    <ellipse cx="20" cy="20" rx="30" ry="4"/>
    <ellipse cx="150" cy="22" rx="60" ry="5"/>
    <ellipse cx="215" cy="32" rx="30" ry="6"/>
    <ellipse cx="25" cy="54" rx="25" ry="3.5"/>
    <ellipse cx="100" cy="53" rx="35" ry="3.5"/>
    <ellipse cx="165" cy="54" rx="22" ry="3"/>
    <ellipse cx="220" cy="53" rx="20" ry="3.5"/>
  </g>
  <g filter="url(#bl1)">
  <!-- trees right -->
  <path d="M100,113 L105,108.5 L125,103 L140,99 L152,96 L168,93 L181,90 L195,86 L203,82 L210,78 L218,79 L228,80 L241,81 L241,117 L100,117 Z" fill="#121418"/>
  <path d="M100,114 L140,111 L241,108 L241,120 L100,120 Z" fill="#3a3d30" opacity="0.85"/>
  <!-- tower -->
  <path d="M143,70 V112" stroke="#d0d0d0" stroke-width="0.7"/>
  <!-- noise barrier left -->
  <path d="M0,96 L88,107 L88,112 L0,122 Z" fill="#5b7645"/>
  <path d="M5,97 V121 M12,98 V120 M19,99 V119 M26,100 V118 M33,101 V117 M40,101.5 V116.5 M47,102 V116 M54,103 V115 M61,104 V114 M68,105 V113.5 M75,105.5 V113 M82,106 V112.5" stroke="#6f8c55" stroke-width="1.6" opacity="0.6"/>
  <path d="M0,122 L88,112 L97,113 L0,128 Z" fill="#86877e"/>
  <!-- road -->
  <path d="M0,128 L97,113 L241,114 L241,181 L0,181 Z" fill="url(#road)"/>
  <path d="M0,128 L97,113.5 L10,145 L0,147 Z" fill="#3b3a2e"/>
  <path d="M14,153 L90,114.5 L92.5,114.5 L21,154 Z" fill="#d6d6d6"/>
  <path d="M140,139 L148,139 L168,150 L160,150 Z" fill="#c8c8c8"/>
  <path d="M108,121 L112,121 L116,125 L112,125 Z" fill="#b0b0b0"/>
  <path d="M216,135 L241,137.5 L241,139.5 L212,136 Z" fill="#c0c0c0"/>
  <path d="M152,122 L170,127 L166,127 L149,122 Z" fill="#9a9a9a"/>
  <rect x="105" y="111.2" width="3.5" height="2.3" fill="#8a2a25"/>
  </g>
  <!-- controls -->
  <rect x="0" y="138" width="241" height="43" fill="url(#ctl)"/>
  <rect x="0" y="166" width="241" height="15" fill="#000"/>
  <path d="M9.5,156.5 L13.5,159.3 L9.5,162.1 Z" fill="#fff"/>
  <text x="20.8" y="161.7" font-size="5.8" font-weight="bold" fill="#fff" font-family="Liberation Sans">0:00 / 35:08</text>
  <g fill="#999"><path d="M185,157.8 H186.5 L188.5,156 V162.8 L186.5,161 H185 Z"/></g>
  <path d="M190,157 Q191.5,159.4 190,161.8" stroke="#999" stroke-width="0.5" fill="none"/>
  <g stroke="#fff" stroke-width="0.8" fill="none"><path d="M206,157.5 V156.5 H207.5 M209.5,156.5 H211 V157.5 M211,160.5 V161.8 H209.5 M207.5,161.8 H206 V160.5"/></g>
  <g fill="#fff"><circle cx="230.5" cy="156.8" r="0.55"/><circle cx="230.5" cy="159.2" r="0.55"/><circle cx="230.5" cy="161.6" r="0.55"/></g>
  <rect x="7" y="170.4" width="227" height="1" fill="#7a7a7a"/>
</svg>
<svg class="abs" style="left:390px;top:470px" width="260" height="200" viewBox="390 470 260 200">
<path d="M417,479.3 H629" stroke="#e6e6e6" stroke-width="0.6"/><path d="M417,502.4 H629" stroke="#e6e6e6" stroke-width="0.6"/><path d="M417,525.0 H629" stroke="#e6e6e6" stroke-width="0.6"/><path d="M417,548.1 H629" stroke="#e6e6e6" stroke-width="0.6"/><path d="M417,571.2 H629" stroke="#e6e6e6" stroke-width="0.6"/><path d="M417,594.0 H629" stroke="#e6e6e6" stroke-width="0.6"/><path d="M417,616.6 H629" stroke="#e6e6e6" stroke-width="0.6"/><path d="M441.4,479.3 V625.4" stroke="#e6e6e6" stroke-width="0.6"/><path d="M481.8,479.3 V625.4" stroke="#e6e6e6" stroke-width="0.6"/><path d="M522.3,479.3 V625.4" stroke="#e6e6e6" stroke-width="0.6"/><path d="M562.3,479.3 V625.4" stroke="#e6e6e6" stroke-width="0.6"/><path d="M602.3,479.3 V625.4" stroke="#e6e6e6" stroke-width="0.6"/>
<path d="M420.9,566.5 L421.4,568.3 L422.5,567.2 L440.1,567.2 L440.7,570.5 L441.2,596.9 L441.8,603.5 L442.3,614.5 L442.9,599.1 L443.8,596.9 L444.7,601.3 L445.5,594.7 L446.4,599.1 L447.3,584.8 L448.0,601.3 L448.8,599.1 L449.9,603.5 L451.0,583.7 L451.7,603.5 L453.0,602.4 L454.3,583.7 L454.8,603.5 L455.4,599.1 L460.5,599.1 L461.4,559.5 L462.0,569.4 L463.6,568.3 L464.9,572.7 L465.8,569.4 L467.1,574.9 L468.0,588.1 L469.3,599.1 L470.4,594.7 L471.5,581.5 L472.4,601.3 L474.1,596.9 L475.2,610.1 L475.9,583.7 L476.8,599.1 L479.6,599.1 L481.8,602.4 L482.9,603.5 L485.1,599.1 L487.7,599.1 L488.4,544.1 L489.5,572.7 L491.0,574.9 L492.1,588.1 L493.2,581.5 L494.3,588.1 L495.7,572.7 L496.5,568.3 L497.4,572.7 L497.9,601.3 L498.7,605.7 L499.4,612.3 L500.5,596.9 L501.6,584.8 L502.7,599.1 L504.9,599.1 L506.0,605.7 L506.6,584.8 L507.5,599.1 L511.5,599.1 L512.8,603.5 L513.7,607.9 L514.8,582.6 L515.9,599.1 L517.0,601.3 L518.1,599.1 L519.2,585.9 L520.3,566.1 L521.4,596.9 L522.5,599.1 L523.6,605.7 L524.7,610.1 L525.8,599.1 L526.4,550.7 L527.6,573.8 L529.8,572.7 L543.0,572.7 L549.6,573.8 L550.7,572.7 L577.0,572.7 L578.1,577.1 L578.8,596.9 L579.5,603.5 L580.3,602.4 L581.4,599.1 L582.1,605.7 L582.5,611.2 L583.6,607.9 L584.7,610.1 L585.8,607.4 L586.9,610.1 L588.0,607.9 L589.1,609.0 L590.2,606.8 L591.3,608.3 L592.4,606.8 L594.6,605.7 L595.3,596.9 L595.7,552.9 L596.4,566.1 L596.8,572.7 L600.1,572.7 L600.8,587.0 L601.4,572.7 L614.4,572.7 L615.1,589.2 L621.0,589.2 L621.6,598.0 L622.3,579.3 L622.5,493.6 L623.2,548.5 L623.8,539.7 L624.7,552.9 L625.4,539.7 L626.0,530.9 L626.7,524.3 L627.4,526.5 L628.0,559.5 L628.7,572.7 L628.9,572.7 L628.9,625.4 L420.9,625.4 Z" fill="#c4d4a8" opacity="0.85"/>
<path d="M420.9,566.5 L421.4,568.3 L422.5,567.2 L440.1,567.2 L440.7,570.5 L441.2,596.9 L441.8,603.5 L442.3,614.5 L442.9,599.1 L443.8,596.9 L444.7,601.3 L445.5,594.7 L446.4,599.1 L447.3,584.8 L448.0,601.3 L448.8,599.1 L449.9,603.5 L451.0,583.7 L451.7,603.5 L453.0,602.4 L454.3,583.7 L454.8,603.5 L455.4,599.1 L460.5,599.1 L461.4,559.5 L462.0,569.4 L463.6,568.3 L464.9,572.7 L465.8,569.4 L467.1,574.9 L468.0,588.1 L469.3,599.1 L470.4,594.7 L471.5,581.5 L472.4,601.3 L474.1,596.9 L475.2,610.1 L475.9,583.7 L476.8,599.1 L479.6,599.1 L481.8,602.4 L482.9,603.5 L485.1,599.1 L487.7,599.1 L488.4,544.1 L489.5,572.7 L491.0,574.9 L492.1,588.1 L493.2,581.5 L494.3,588.1 L495.7,572.7 L496.5,568.3 L497.4,572.7 L497.9,601.3 L498.7,605.7 L499.4,612.3 L500.5,596.9 L501.6,584.8 L502.7,599.1 L504.9,599.1 L506.0,605.7 L506.6,584.8 L507.5,599.1 L511.5,599.1 L512.8,603.5 L513.7,607.9 L514.8,582.6 L515.9,599.1 L517.0,601.3 L518.1,599.1 L519.2,585.9 L520.3,566.1 L521.4,596.9 L522.5,599.1 L523.6,605.7 L524.7,610.1 L525.8,599.1 L526.4,550.7 L527.6,573.8 L529.8,572.7 L543.0,572.7 L549.6,573.8 L550.7,572.7 L577.0,572.7 L578.1,577.1 L578.8,596.9 L579.5,603.5 L580.3,602.4 L581.4,599.1 L582.1,605.7 L582.5,611.2 L583.6,607.9 L584.7,610.1 L585.8,607.4 L586.9,610.1 L588.0,607.9 L589.1,609.0 L590.2,606.8 L591.3,608.3 L592.4,606.8 L594.6,605.7 L595.3,596.9 L595.7,552.9 L596.4,566.1 L596.8,572.7 L600.1,572.7 L600.8,587.0 L601.4,572.7 L614.4,572.7 L615.1,589.2 L621.0,589.2 L621.6,598.0 L622.3,579.3 L622.5,493.6 L623.2,548.5 L623.8,539.7 L624.7,552.9 L625.4,539.7 L626.0,530.9 L626.7,524.3 L627.4,526.5 L628.0,559.5 L628.7,572.7 L628.9,572.7" fill="none" stroke="#5f8a1f" stroke-width="1" stroke-linejoin="round"/>
<g font-family="Liberation Sans" font-size="4.8" fill="#3a3a3a"><text x="414.3" y="480.90000000000003" text-anchor="end">4,000</text><text x="414.3" y="504.0" text-anchor="end">3,500</text><text x="414.3" y="526.6" text-anchor="end">3,000</text><text x="414.3" y="549.7" text-anchor="end">2,500</text><text x="414.3" y="572.8000000000001" text-anchor="end">2,000</text><text x="414.3" y="595.6" text-anchor="end">1,500</text><text x="414.3" y="618.2" text-anchor="end">1,000</text><text x="441.4" y="636.6" text-anchor="middle" font-size="5.1">6:40pm</text><text x="481.8" y="636.6" text-anchor="middle" font-size="5.1">6:50pm</text><text x="522.3" y="636.6" text-anchor="middle" font-size="5.1">7:00pm</text><text x="562.3" y="636.6" text-anchor="middle" font-size="5.1">7:10pm</text><text x="602.3" y="636.6" text-anchor="middle" font-size="5.1">7:20pm</text><text x="441.4" y="644.8" text-anchor="middle" font-size="5.1">9/12</text></g>
<g font-family="Liberation Sans" font-size="5.5" fill="#444">
<text x="475.7" y="658.2">Time:</text><text x="493.8" y="658.2">--</text>
<rect x="510.8" y="653.6" width="5" height="5" fill="#c4d4a8" stroke="#5f8a1f" stroke-width="0.8"/>
<text x="518" y="658.2">ENGINE RPM:</text><text x="557.5" y="658.2">--</text>
</g>
</svg><!-- table -->
<div class="abs" style="left:130.8px;top:717.4px;width:502px;height:0.8px;background:#e6e6e6"></div>
<div class="abs" style="left:136.7px;top:724px;font-size:6.8px;line-height:9px;font-weight:bold;color:#222;white-space:nowrap">Name</div>
<div class="abs" style="left:404.9px;top:724px;font-size:6.8px;line-height:9px;font-weight:bold;color:#222;white-space:nowrap">No. of values</div>
<svg class="abs" style="left:392.3px;top:724.6px" width="4" height="8" viewBox="0 0 4 8"><path d="M0.2,3.4 L2,0.6 L3.8,3.4 Z M0.2,4.6 L2,7.4 L3.8,4.6 Z" fill="#b0b0b0"/></svg>
<svg class="abs" style="left:527.4px;top:724.6px" width="4" height="8" viewBox="0 0 4 8"><path d="M0.2,3.4 L2,0.6 L3.8,3.4 Z M0.2,4.6 L2,7.4 L3.8,4.6 Z" fill="#b0b0b0"/></svg>
<div class="abs" style="left:130.8px;top:738px;width:502px;height:26.5px;background:#f2f2f2"></div>
<div class="abs" style="left:136.7px;top:744.5px;font-size:6.3px;line-height:9px;color:#444;white-space:nowrap">ENGINE RPM</div>
<div class="abs" style="left:404.9px;top:744.8px;font-size:6.3px;line-height:9px;color:#444;white-space:nowrap">5496</div>
<div class="abs" style="left:540px;top:743.8px;width:31px;height:15px;background:#6b8e23;border-radius:1.3px"></div>
<svg class="abs" style="left:543.5px;top:748.8px" width="6" height="5" viewBox="0 0 6 5"><path d="M0.3,0.2 V4.6 H5.8" stroke="#fff" stroke-width="0.7" fill="none"/><path d="M1.2,4.2 V2.2 L2.2,1.2 L3.2,2.8 L4.2,1.8 L5.2,2.5 V4.2 Z" fill="#fff"/></svg>
<div class="abs" style="left:551.5px;top:747.6px;font-size:5.6px;line-height:9px;font-weight:bold;color:#fff;white-space:nowrap">Show</div>
<div class="abs" style="left:540px;top:769.9px;width:31px;height:15px;background:#6b8e23;border-radius:1.3px"></div>
</body></html>
